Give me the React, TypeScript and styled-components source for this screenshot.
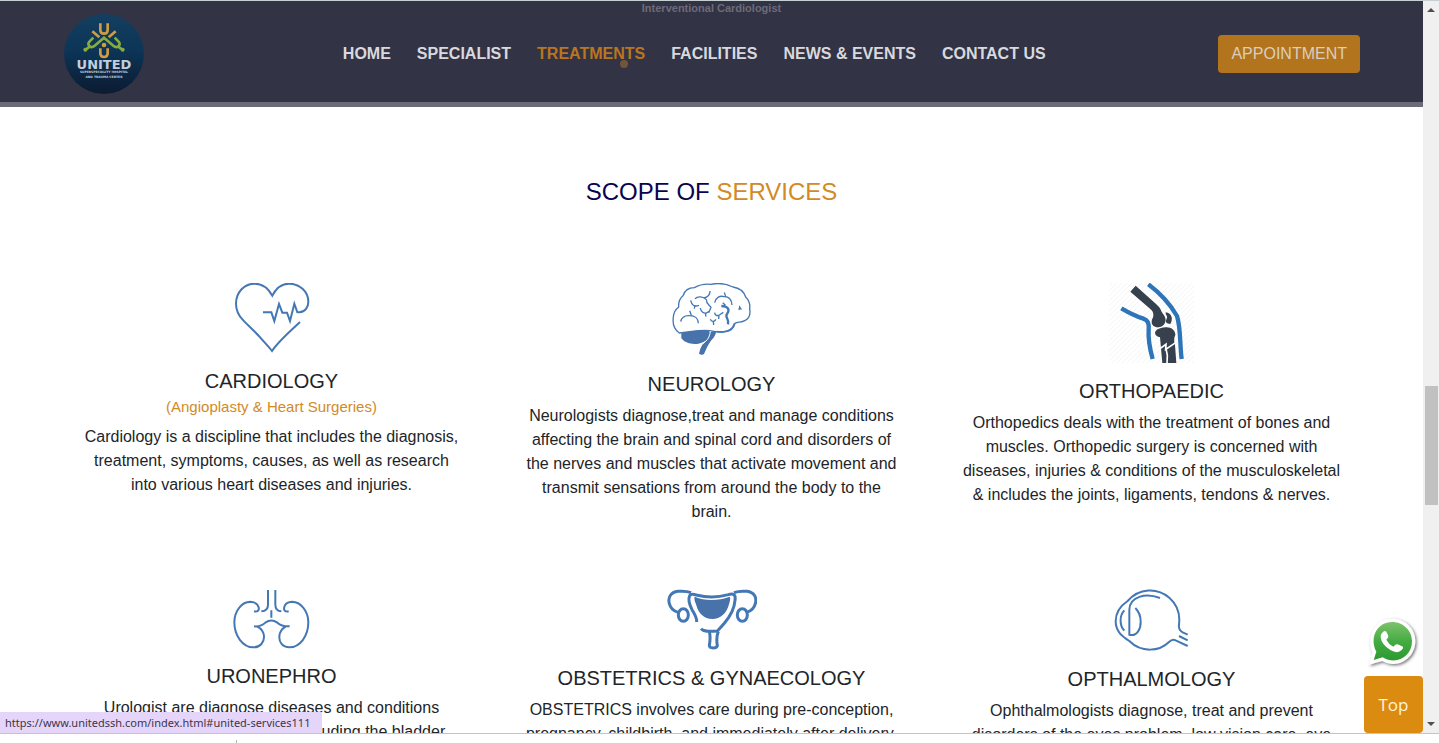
import React from "react";
import styled, { createGlobalStyle } from "styled-components";

const GlobalStyle = createGlobalStyle`
  * { box-sizing: border-box; }
  body {
    margin: 0;
    background: #fff;
    color: #212529;
    font-family: "Liberation Sans", Arial, sans-serif;
    font-size: 16px;
    line-height: 24px;
  }
`;

const Screen = styled.div`
  display: flex;
  flex-direction: column;
  height: 100vh;
  overflow: hidden;
  border-top: 1px solid #c6cfd2;
`;

const Viewport = styled.div`
  position: relative;
  display: flex;
  flex: 1;
  min-height: 0;
  border-bottom: 1px solid #c4c4c4;
`;

const Page = styled.div`
  display: flex;
  flex-direction: column;
  flex: 1;
  min-width: 0;
  overflow: hidden;
`;

const BottomStrip = styled.div`
  flex: none;
  height: 9px;
  padding: 6px 0 0 236px;
`;

const Tick = styled.div`
  width: 1px;
  height: 3px;
  background: #b5b5b5;
`;

const Header = styled.header`
  position: relative;
  display: flex;
  flex: none;
  align-items: center;
  height: 106px;
  padding: 4px 63px 0 64px;
  background: #333346;
  border-bottom: 5px solid #6b6a77;
`;

const PassingText = styled.span`
  position: absolute;
  top: 0;
  left: 0;
  right: 0;
  color: #6c6b79;
  font-size: 11px;
  font-weight: 700;
  line-height: 14px;
  text-align: center;
`;

const LogoLink = styled.a`
  display: block;
  height: 80px;
`;

const Nav = styled.nav`
  display: flex;
  flex: 1;
  justify-content: center;
  gap: 26px;
  padding-left: 26px;
`;

const NavLink = styled.a<{ $active?: boolean }>`
  position: relative;
  color: ${(p) => (p.$active ? "#b9761f" : "#d9d9dd")};
  font-weight: 700;
  text-decoration: none;
  white-space: nowrap;
`;

const ActiveDot = styled.span`
  position: absolute;
  right: 17px;
  bottom: -2px;
  width: 8px;
  height: 8px;
  border-radius: 50%;
  background: #74543a;
`;

const AppointmentButton = styled.button`
  height: 38px;
  padding: 0 13px;
  border: 0;
  border-radius: 4px;
  background: #b2751d;
  color: #dccdbd;
  font: inherit;
`;

const Services = styled.main`
  flex: 1;
  min-height: 0;
  overflow: hidden;
  padding-top: 71px;
`;

const Title = styled.h2`
  margin: 0 0 77px;
  color: #0b0250;
  font-size: 24px;
  font-weight: 400;
  line-height: 28px;
  text-align: center;
`;

const TitleAccent = styled.span`
  color: #d28a26;
`;

const Grid = styled.div`
  display: grid;
  grid-template-columns: repeat(3, 1fr);
  row-gap: 65px;
  max-width: 1320px;
  margin: 0 auto;
`;

const Card = styled.article`
  display: flex;
  flex-direction: column;
  align-items: center;
  padding: 0 30px;
  text-align: center;
`;

const CardTitle = styled.h3`
  margin: 14px 0 0;
  font-size: 20px;
  font-weight: 400;
  line-height: 24px;
`;

const CardNote = styled.p`
  margin: 2px 0 -2px;
  color: #d28a26;
  font-size: 15px;
  line-height: 24px;
`;

const CardText = styled.p`
  margin: 8px 0 0;
`;

const LineArt = styled.svg`
  display: block;
  flex: none;
  fill: none;
  stroke: #4478b4;
  stroke-width: 6;
`;

const Floating = styled.div`
  position: absolute;
  right: 16px;
  bottom: 0;
  display: flex;
  flex-direction: column;
  align-items: flex-end;
  gap: 3px;
`;

const ChatLink = styled.a`
  display: block;
  height: 56px;
  margin-right: 4px;
`;

const TopButton = styled.button`
  width: 59px;
  height: 57px;
  border: 0;
  border-radius: 4px;
  background: #da8b10;
  color: #fff3df;
  font-family: "Open Sans", "Noto Sans", sans-serif;
  font-size: 17px;
`;

const StatusBubble = styled.div`
  position: absolute;
  left: 0;
  bottom: 0;
  padding: 0 12px 0 5px;
  background: #e6d5fa;
  color: #3c3648;
  font-family: "Noto Sans", sans-serif;
  font-size: 11px;
  line-height: 21px;
`;

const Scrollbar = styled.div`
  display: flex;
  flex-direction: column;
  flex: none;
  align-items: center;
  width: 16px;
  background: #f0f0f0;
`;

const Track = styled.div<{ $share: number }>`
  flex: ${(p) => p.$share} 0 0;
`;

const Thumb = styled(Track)`
  width: 13px;
  background: #c1c1c1;
`;

const Arrow = styled.svg`
  display: block;
  flex: none;
  fill: #505050;
`;

const Logo = () => (
  <svg width="80" height="80" viewBox="42 42 240 240" role="img" aria-label="United Superspeciality Hospital and Trauma Center">
    <defs>
      <linearGradient id="logoSky" x1="0" y1="0" x2="0" y2="1">
        <stop offset="0" stopColor="#143f60" />
        <stop offset="0.45" stopColor="#0c3557" />
        <stop offset="1" stopColor="#0c1b31" />
      </linearGradient>
    </defs>
    <circle cx="162" cy="162" r="120" fill="url(#logoSky)" />
    <g fill="none" strokeWidth="8">
      <path stroke="#86ad3c" d="M130 113l-11 11q-8 9 0 15 7 5 15-2l28-24 28 24q8 7 15 2 8-6 0-15l-11-11" />
      <path stroke="#86ad3c" d="M107 149l15-11M217 149l-15-11" />
      <g stroke="#cf9b43">
        <path d="M151 70v20q0 11 11 11t11-11V70" />
        <path d="M127 94l21 18M197 94l-21 18" />
        <path d="M151 145v15q0 11 11 11t11-11v-15" />
      </g>
    </g>
    <circle cx="162" cy="135" r="7" fill="#cf9b43" />
    <circle cx="106" cy="149" r="6" fill="#86ad3c" />
    <circle cx="218" cy="149" r="6" fill="#86ad3c" />
    <g fill="#c3cfdd" textAnchor="middle" fontWeight="700" fontFamily="DejaVu Sans, sans-serif">
      <text x="162" y="206" fontSize="39">UNITED</text>
      <text x="162" y="220" fontSize="9">SUPERSPECIALITY HOSPITAL</text>
      <text x="162" y="233" fontSize="9">AND TRAUMA CENTER</text>
    </g>
  </svg>
);

const HeartIcon = () => (
  <LineArt width="81" height="72" viewBox="33 39 243 216" aria-hidden="true">
    <path d="M129 127h25l9 26 14-51 10 26h14l9 25 13-52 9 26h6c18-1 27-16 27-32 0-31-27-54-58-54-22 0-39 14-50 36-12-22-29-36-53-36-32 0-56 27-56 60 0 18 8 35 20 48 15 17 36 34 53 54 14 16 26 28 35 40 18-28 48-54 84-87" />
  </LineArt>
);

const BrainIcon = () => (
  <LineArt width="81" height="75" viewBox="33 39 243 225" aria-hidden="true">
    <g strokeWidth="4">
      <path d="M58 189C44 180 37 163 40 141c1-14 7-23 16-30-1-15 3-26 13-34 5-15 17-24 34-24 16-9 34-12 50-10 23-5 48-1 66 8 20 3 33 15 38 30 9 9 14 21 12 35 3 16-2 30-15 36-8 5-22 4-29 8-4 16-14 24-30 24-13 4-30 1-46-2-28-4-58 4-91 7z" />
      <path d="M62 155c3-14 14-19 27-18 16 0 26 9 26 23M94 136l-5-14M92 91c3 16 12 20 25 15M105 105l-2 11M105 86c8-8 26-7 34 3M131 84c15-3 19-10 19-21M139 88c-1 12 6 15 14 24l-7 16M121 114c2 12 10 17 19 15l7-5M136 130l2 10M164 98c4-16 16-22 28-18 15-1 23 9 24 25M197 80l-4-13M188 98l7 6-6 6M164 128c1 9 8 10 14 7l12-8M177 135l-1 12M151 148c3 7 11 10 17 0M160 155l1 10M237 120l2-9 5 8" />
    </g>
    <path strokeWidth="7" d="M184 108c22 1 26 12 17 24-8 10 8 14 3 31" />
    <g fill="#4772aa" stroke="none">
      <path d="M64 190c26-7 54-11 87-6 0 21-13 33-36 37-24 3-43-4-51-17z" />
      <path d="M149 186l20-3q-3 17-15 28-9 11-22 41-6 5-15-1 2-14 10-27 17-12 22-38z" />
    </g>
    <path strokeWidth="5" d="M169 185c26 4 47 1 55-25" />
    <path stroke="#fff" strokeWidth="3" d="M151 183c-2 22-12 34-31 40" />
  </LineArt>
);

const KneeIcon = () => (
  <LineArt width="85" height="82" viewBox="27 39 255 246" aria-hidden="true">
    <defs>
      <pattern id="hatch" width="15" height="15" patternUnits="userSpaceOnUse">
        <path d="M-2 17L17-2" stroke="#f0f0f0" strokeWidth="2" />
      </pattern>
    </defs>
    <rect x="27" y="39" width="255" height="240" fill="url(#hatch)" stroke="none" />
    <g stroke="#2d74b8" strokeWidth="13">
      <path d="M64 115c24 14 45 24 66 31 14 5 17 13 16 31-2 32 3 58 12 90" />
      <path d="M145 43c35 26 65 59 86 95 12 38 8 85 14 129" />
    </g>
    <g fill="#37404d" stroke="none">
      <path d="M91 65l16-18 62 56c16 14 12 20 22 31 12 15 5 35-15 38-13 1-22-6-21-18 0-8 6-11 5-19 0-8-2-11-9-18z" />
      <path d="M197 127c17 1 24 20 14 35-12-1-17-5-10-18 2-6-5-9-4-17z" />
      <path d="M165 188c3-12 18-14 30-16 18-2 32 9 31 23-5 11-4 19-1 30l4 54h-42l-7-77c-8-2-15-6-15-14z" />
    </g>
    <g stroke="#fff" strokeWidth="5">
      <path d="M176 239l22-16-1 15 30-20M198 236l4 20-1 24" />
    </g>
  </LineArt>
);

const KidneyIcon = () => (
  <LineArt width="81" height="61" viewBox="33 27 243 183" aria-hidden="true">
    <path d="M144 30v44c0 13-7 19-20 20M166 30v44c0 13 6 19 18 20M154 91v22" />
    <path d="M102 94c23 5 17-25-6-28-31-4-53 28-53 61 0 40 25 75 57 75 21 0 33-16 32-33-1-15-9-24-21-30M102 139c18 2 26-3 34-11 12-9 24-9 36 0 9 8 18 12 37 11M206 94c-22 5-16-25 5-28 31-4 54 28 54 61 0 40-24 75-57 75-21 0-31-16-30-33 1-15 9-24 20-30" />
  </LineArt>
);

const UterusIcon = () => (
  <LineArt width="91" height="63" viewBox="33 27 273 189" aria-hidden="true">
    <g strokeWidth="9">
      <path d="M125 126c1-14-7-24-14-37-8-16-12-31-7-42 3-6 11-5 20-2 31 8 64 8 96-1 16-5 23 0 20 17-2 29-17 51-32 69-10 12-14 16-21 23M138 146c8 9 23 9 51 7" />
      <path d="M108 38c-12-5-25-5-39-4-22 3-31 18-26 37 3 12 12 22 26 26M237 38c12-5 25-5 39-4 22 3 30 18 25 37-3 12-12 22-26 26M163 154c4 15 3 25 0 43 1 9 21 9 24 0-3-18-3-28 3-43" />
      <ellipse cx="85" cy="105" rx="15" ry="19" />
      <ellipse cx="262" cy="105" rx="15" ry="19" />
    </g>
    <path fill="#4772aa" stroke="none" d="M119 50c32 14 72 12 105 0 3 5 1 13-2 23-7 28-26 44-50 44-25 0-42-18-47-38-2-10-9-18-6-29z" />
  </LineArt>
);

const EyeIcon = () => (
  <LineArt width="81" height="64" viewBox="33 27 243 192" aria-hidden="true">
    <path d="M263 198l-36-17c-8-4-13-2-20 5-29 29-83 33-119-3-21-14-41-28-41-59 0-29 15-47 36-61 34-40 89-41 125-10 26 23 33 48 29 80-2 13 2 19 11 24l15 7M237 168l26 13" />
    <path d="M180 54c-43-16-91-5-92 35v75c24 7 35-20 34-40 0-16-5-29-16-40M73 91c-15 15-15 45 0 61" />
  </LineArt>
);

const ChatIcon = () => (
  <svg width="52" height="56" viewBox="81 51 156 168" role="img" aria-label="WhatsApp">
    <defs>
      <linearGradient id="chatGreen" x1="0" y1="0" x2="0" y2="1">
        <stop offset="0" stopColor="#7dc36c" />
        <stop offset="0.5" stopColor="#45ab43" />
        <stop offset="1" stopColor="#2a9a30" />
      </linearGradient>
      <filter id="chatShadow" x="-20%" y="-20%" width="140%" height="140%">
        <feDropShadow dx="4" dy="4" stdDeviation="4" floodColor="#444" floodOpacity="0.75" />
      </filter>
    </defs>
    <path filter="url(#chatShadow)" fill="#fff" d="M87 194l10-36C78 110 105 56 156 56c40 0 70 30 70 67 0 51-51 86-99 60z" />
    <path fill="url(#chatGreen)" d="M101 180l8-25C87 111 113 66 156 66c34 0 60 26 60 58 0 46-47 73-88 48z" />
    <path fill="#fff" d="M126 99q10-12 15 0l4 9q1 5-6 11 7 14 21 21 8-9 13-7l13 6q7 3-1 11-12 13-34 0-27-17-29-38-1-8 4-13z" />
  </svg>
);

const navItems = ["HOME", "SPECIALIST", "TREATMENTS", "FACILITIES", "NEWS & EVENTS", "CONTACT US"];

type Service = { name: string; note?: string; text: string; Icon: React.FC };

const services: Service[] = [
  {
    name: "CARDIOLOGY",
    note: "(Angioplasty & Heart Surgeries)",
    text: "Cardiology is a discipline that includes the diagnosis, treatment, symptoms, causes, as well as research into various heart diseases and injuries.",
    Icon: HeartIcon,
  },
  {
    name: "NEUROLOGY",
    text: "Neurologists diagnose,treat and manage conditions affecting the brain and spinal cord and disorders of the nerves and muscles that activate movement and transmit sensations from around the body to the brain.",
    Icon: BrainIcon,
  },
  {
    name: "ORTHOPAEDIC",
    text: "Orthopedics deals with the treatment of bones and muscles. Orthopedic surgery is concerned with diseases, injuries & conditions of the musculoskeletal & includes the joints, ligaments, tendons & nerves.",
    Icon: KneeIcon,
  },
  {
    name: "URONEPHRO",
    text: "Urologist are diagnose diseases and conditions affecting the urinary system including the bladder",
    Icon: KidneyIcon,
  },
  {
    name: "OBSTETRICS & GYNAECOLOGY",
    text: "OBSTETRICS involves care during pre-conception, pregnancy, childbirth, and immediately after delivery.",
    Icon: UterusIcon,
  },
  {
    name: "OPTHALMOLOGY",
    text: "Ophthalmologists diagnose, treat and prevent disorders of the eyes problem, low vision care, eye",
    Icon: EyeIcon,
  },
];

export default function App() {
  return (
    <>
      <GlobalStyle />
      <Screen>
        <Viewport>
          <Page>
            <Header>
              <PassingText>Interventional Cardiologist</PassingText>
              <LogoLink href="#home">
                <Logo />
              </LogoLink>
              <Nav>
                {navItems.map((item) => {
                  const active = item === "TREATMENTS";
                  return (
                    <NavLink key={item} href="#united-services111" $active={active}>
                      {item}
                      {active && <ActiveDot />}
                    </NavLink>
                  );
                })}
              </Nav>
              <AppointmentButton type="button">APPOINTMENT</AppointmentButton>
            </Header>
            <Services>
              <Title>
                SCOPE OF <TitleAccent>SERVICES</TitleAccent>
              </Title>
              <Grid>
                {services.map(({ name, note, text, Icon }) => (
                  <Card key={name}>
                    <Icon />
                    <CardTitle>{name}</CardTitle>
                    {note && <CardNote>{note}</CardNote>}
                    <CardText>{text}</CardText>
                  </Card>
                ))}
              </Grid>
            </Services>
          </Page>
          <Scrollbar aria-hidden="true">
            <Arrow width="16" height="17" viewBox="0 0 16 17">
              <path d="M4 11l4-4 4 4z" />
            </Arrow>
            <Track $share={368} />
            <Thumb $share={119} />
            <Track $share={211} />
            <Arrow width="16" height="17" viewBox="0 0 16 17">
              <path d="M4 6l4 4 4-4z" />
            </Arrow>
          </Scrollbar>
          <Floating>
            <ChatLink href="#whatsapp">
              <ChatIcon />
            </ChatLink>
            <TopButton type="button">Top</TopButton>
          </Floating>
          <StatusBubble>https://www.unitedssh.com/index.html#united-services111</StatusBubble>
        </Viewport>
        <BottomStrip>
          <Tick />
        </BottomStrip>
      </Screen>
    </>
  );
}
